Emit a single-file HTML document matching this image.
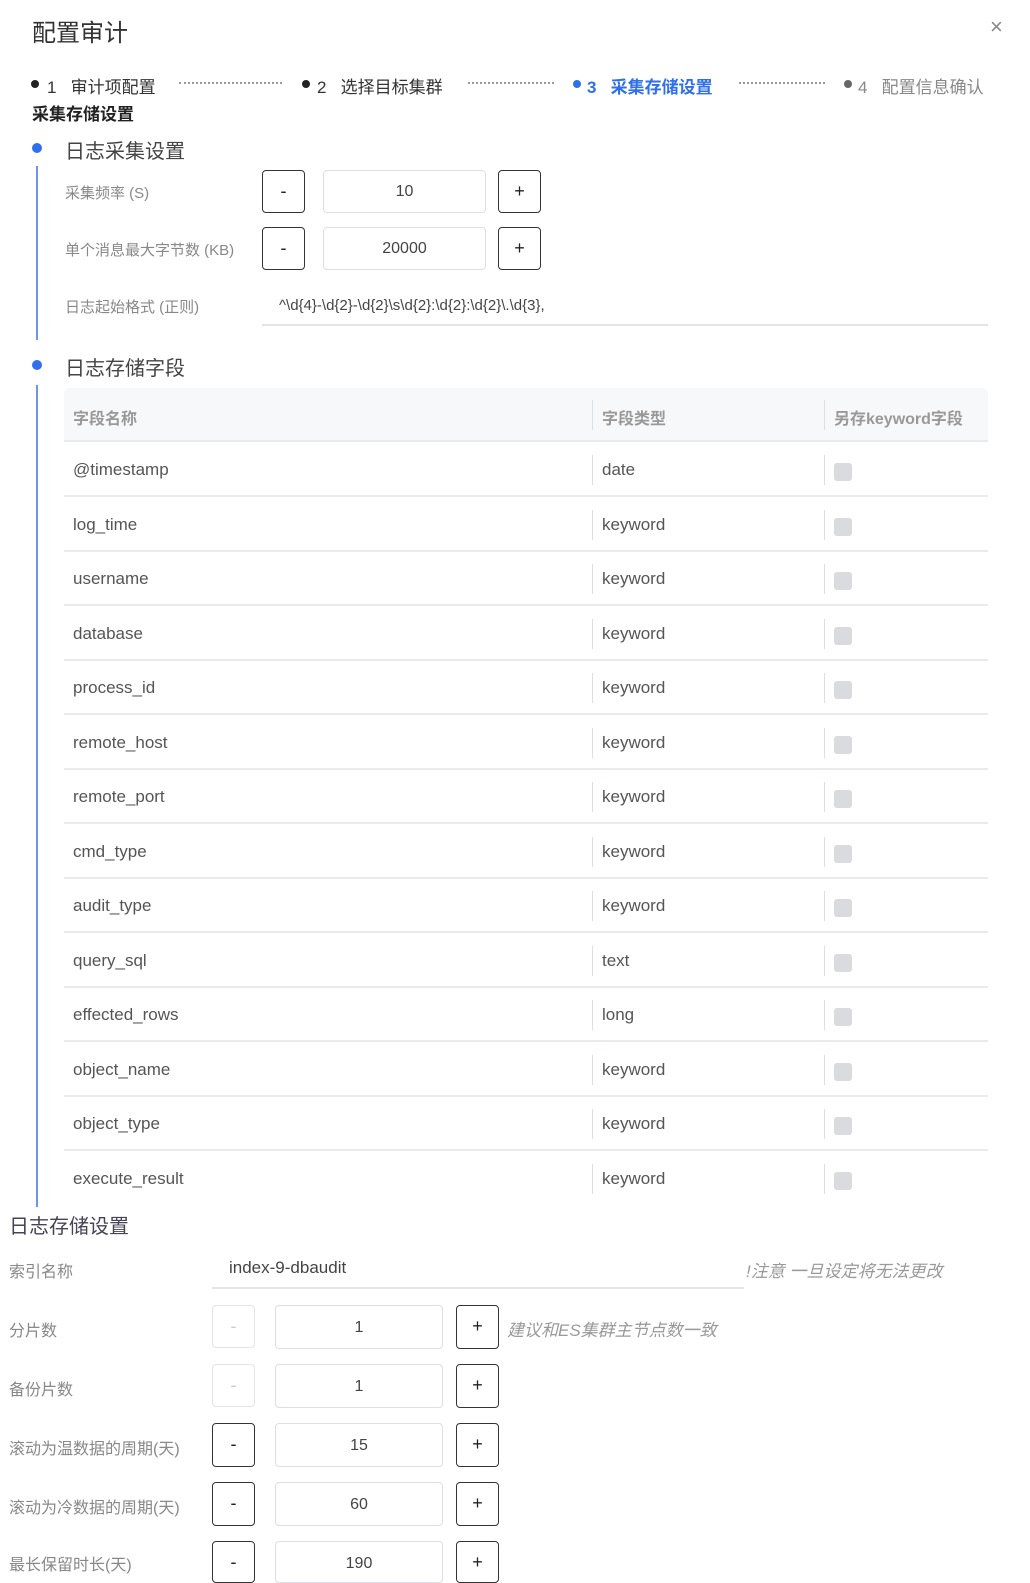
<!DOCTYPE html>
<html style="width:1030px;height:1583px;overflow:hidden"><head><meta charset="utf-8"><style>
*{margin:0;padding:0;box-sizing:border-box}
body{width:1030px;height:1583px;overflow:hidden;background:#fff;font-family:"Liberation Sans","Noto Sans CJK SC",sans-serif;color:#333;position:relative}
.a{position:absolute;white-space:nowrap}
.btn{position:absolute;width:43px;height:43px;border:1.5px solid #333;border-radius:4px;text-align:center;line-height:40px;font-size:18px;color:#222;background:#fff}
.btn.d{border-color:#e2e4e8;color:#ccc}
.inp{position:absolute;border:1px solid #dcdfe6;border-radius:4px;text-align:center;font-size:16px;color:#444;background:#fff}
.lbl{position:absolute;font-size:15px;color:#888;white-space:nowrap}
.row{position:absolute;left:64px;width:924px;height:54px;border-bottom:2px solid #e8eaee;font-size:17px;color:#555}
.row span{position:absolute;top:17px}
.sep{position:absolute;top:12px;width:1px;height:30px;background:#dcdfe6}
.cb{position:absolute;left:770px;top:20px;width:18px;height:18px;border-radius:3px;background:#d9dbde}
.dot{position:absolute;width:10px;height:10px;border-radius:50%}
</style></head><body>
<div class="a" style="left:32px;top:13px;font-size:24px;color:#333">配置审计</div>
<div class="a" style="left:990px;top:14px;font-size:22px;color:#888">×</div>

<div class="dot" style="left:31px;top:80px;width:8px;height:8px;background:#222"></div>
<div class="a" style="left:47px;top:73px;font-size:17px;color:#333">1&nbsp;&nbsp;&nbsp;审计项配置</div>
<div class="a" style="left:179px;top:82px;width:103px;border-top:2px dotted #999"></div>
<div class="dot" style="left:302px;top:80px;width:8px;height:8px;background:#222"></div>
<div class="a" style="left:317px;top:73px;font-size:17px;color:#333">2&nbsp;&nbsp;&nbsp;选择目标集群</div>
<div class="a" style="left:468px;top:82px;width:86px;border-top:2px dotted #999"></div>
<div class="dot" style="left:573px;top:80px;width:8px;height:8px;background:#2f6fea"></div>
<div class="a" style="left:587px;top:73px;font-size:17px;color:#2f6fea;font-weight:bold">3&nbsp;&nbsp;&nbsp;采集存储设置</div>
<div class="a" style="left:739px;top:82px;width:86px;border-top:2px dotted #999"></div>
<div class="dot" style="left:844px;top:80px;width:8px;height:8px;background:#666"></div>
<div class="a" style="left:858px;top:73px;font-size:17px;color:#888">4&nbsp;&nbsp;&nbsp;配置信息确认</div>

<div class="a" style="left:32px;top:100px;font-size:17px;font-weight:bold;color:#222">采集存储设置</div>

<div class="dot" style="left:32px;top:143px;background:#2f6fea"></div>
<div class="a" style="left:36px;top:166px;width:1.5px;height:174px;background:#6f95ea"></div>
<div class="a" style="left:65px;top:135px;font-size:20px;color:#444">日志采集设置</div>

<div class="lbl" style="left:65px;top:182px">采集频率 (S)</div>
<div class="btn" style="left:262px;top:170px">-</div>
<div class="inp" style="left:323px;top:170px;width:163px;height:43px;line-height:41px">10</div>
<div class="btn" style="left:498px;top:170px">+</div>
<div class="lbl" style="left:65px;top:239px">单个消息最大字节数 (KB)</div>
<div class="btn" style="left:262px;top:227px">-</div>
<div class="inp" style="left:323px;top:227px;width:163px;height:43px;line-height:41px">20000</div>
<div class="btn" style="left:498px;top:227px">+</div>
<div class="lbl" style="left:65px;top:296px">日志起始格式 (正则)</div>
<div class="a" style="left:279px;top:297px;font-size:15px;color:#444">^\d{4}-\d{2}-\d{2}\s\d{2}:\d{2}:\d{2}\.\d{3},</div>
<div class="a" style="left:262px;top:324px;width:726px;height:2px;background:#e2e4e8"></div>

<div class="dot" style="left:32px;top:360px;background:#2f6fea"></div>
<div class="a" style="left:36px;top:385px;width:1.5px;height:822px;background:#6f95ea"></div>
<div class="a" style="left:65px;top:352px;font-size:20px;color:#444">日志存储字段</div>

<div class="row" style="top:388px;background:#f7f8fa;border-radius:6px 6px 0 0;font-weight:bold;color:#999;font-size:16px"><span style="left:9px">字段名称</span><div class="sep" style="left:528px"></div><span style="left:538px">字段类型</span><div class="sep" style="left:760px"></div><span style="left:770px">另存keyword字段</span></div>
<div class="row" style="top:443px"><span style="left:9px">@timestamp</span><div class="sep" style="left:528px"></div><span style="left:538px">date</span><div class="sep" style="left:760px"></div><div class="cb"></div></div>
<div class="row" style="top:497.5px"><span style="left:9px">log_time</span><div class="sep" style="left:528px"></div><span style="left:538px">keyword</span><div class="sep" style="left:760px"></div><div class="cb"></div></div>
<div class="row" style="top:552px"><span style="left:9px">username</span><div class="sep" style="left:528px"></div><span style="left:538px">keyword</span><div class="sep" style="left:760px"></div><div class="cb"></div></div>
<div class="row" style="top:606.5px"><span style="left:9px">database</span><div class="sep" style="left:528px"></div><span style="left:538px">keyword</span><div class="sep" style="left:760px"></div><div class="cb"></div></div>
<div class="row" style="top:661px"><span style="left:9px">process_id</span><div class="sep" style="left:528px"></div><span style="left:538px">keyword</span><div class="sep" style="left:760px"></div><div class="cb"></div></div>
<div class="row" style="top:715.5px"><span style="left:9px">remote_host</span><div class="sep" style="left:528px"></div><span style="left:538px">keyword</span><div class="sep" style="left:760px"></div><div class="cb"></div></div>
<div class="row" style="top:770px"><span style="left:9px">remote_port</span><div class="sep" style="left:528px"></div><span style="left:538px">keyword</span><div class="sep" style="left:760px"></div><div class="cb"></div></div>
<div class="row" style="top:824.5px"><span style="left:9px">cmd_type</span><div class="sep" style="left:528px"></div><span style="left:538px">keyword</span><div class="sep" style="left:760px"></div><div class="cb"></div></div>
<div class="row" style="top:879px"><span style="left:9px">audit_type</span><div class="sep" style="left:528px"></div><span style="left:538px">keyword</span><div class="sep" style="left:760px"></div><div class="cb"></div></div>
<div class="row" style="top:933.5px"><span style="left:9px">query_sql</span><div class="sep" style="left:528px"></div><span style="left:538px">text</span><div class="sep" style="left:760px"></div><div class="cb"></div></div>
<div class="row" style="top:988px"><span style="left:9px">effected_rows</span><div class="sep" style="left:528px"></div><span style="left:538px">long</span><div class="sep" style="left:760px"></div><div class="cb"></div></div>
<div class="row" style="top:1042.5px"><span style="left:9px">object_name</span><div class="sep" style="left:528px"></div><span style="left:538px">keyword</span><div class="sep" style="left:760px"></div><div class="cb"></div></div>
<div class="row" style="top:1097px"><span style="left:9px">object_type</span><div class="sep" style="left:528px"></div><span style="left:538px">keyword</span><div class="sep" style="left:760px"></div><div class="cb"></div></div>
<div class="row" style="top:1151.5px;border-bottom:none"><span style="left:9px">execute_result</span><div class="sep" style="left:528px"></div><span style="left:538px">keyword</span><div class="sep" style="left:760px"></div><div class="cb"></div></div>

<div class="a" style="left:9px;top:1210px;font-size:20px;color:#445">日志存储设置</div>
<div class="lbl" style="left:9px;top:1258px;font-size:16px">索引名称</div>
<div class="a" style="left:229px;top:1258px;font-size:17px;color:#444">index-9-dbaudit</div>
<div class="a" style="left:212px;top:1287px;width:532px;height:2px;background:#e2e4e8"></div>
<div class="a" style="left:746px;top:1257px;font-size:17px;color:#999;font-style:italic">!注意 一旦设定将无法更改</div>

<div class="lbl" style="left:9px;top:1317px;font-size:16px">分片数</div>
<div class="btn d" style="left:212px;top:1305px">-</div>
<div class="inp" style="left:275px;top:1305px;width:168px;height:44px;line-height:44px">1</div>
<div class="btn" style="left:456px;top:1305px;height:44px">+</div>
<div class="a" style="left:507px;top:1316px;font-size:17px;color:#999;font-style:italic">建议和ES集群主节点数一致</div>

<div class="lbl" style="left:9px;top:1376px;font-size:16px">备份片数</div>
<div class="btn d" style="left:212px;top:1364px">-</div>
<div class="inp" style="left:275px;top:1364px;width:168px;height:44px;line-height:44px">1</div>
<div class="btn" style="left:456px;top:1364px;height:44px">+</div>

<div class="lbl" style="left:9px;top:1435px;font-size:16px">滚动为温数据的周期(天)</div>
<div class="btn" style="left:212px;top:1423px;height:44px">-</div>
<div class="inp" style="left:275px;top:1423px;width:168px;height:44px;line-height:44px">15</div>
<div class="btn" style="left:456px;top:1423px;height:44px">+</div>

<div class="lbl" style="left:9px;top:1494px;font-size:16px">滚动为冷数据的周期(天)</div>
<div class="btn" style="left:212px;top:1482px;height:44px">-</div>
<div class="inp" style="left:275px;top:1482px;width:168px;height:44px;line-height:44px">60</div>
<div class="btn" style="left:456px;top:1482px;height:44px">+</div>

<div class="lbl" style="left:9px;top:1551px;font-size:16px">最长保留时长(天)</div>
<div class="btn" style="left:212px;top:1541px;height:42px">-</div>
<div class="inp" style="left:275px;top:1541px;width:168px;height:42px;line-height:44px">190</div>
<div class="btn" style="left:456px;top:1541px;height:42px">+</div>
</body></html>
